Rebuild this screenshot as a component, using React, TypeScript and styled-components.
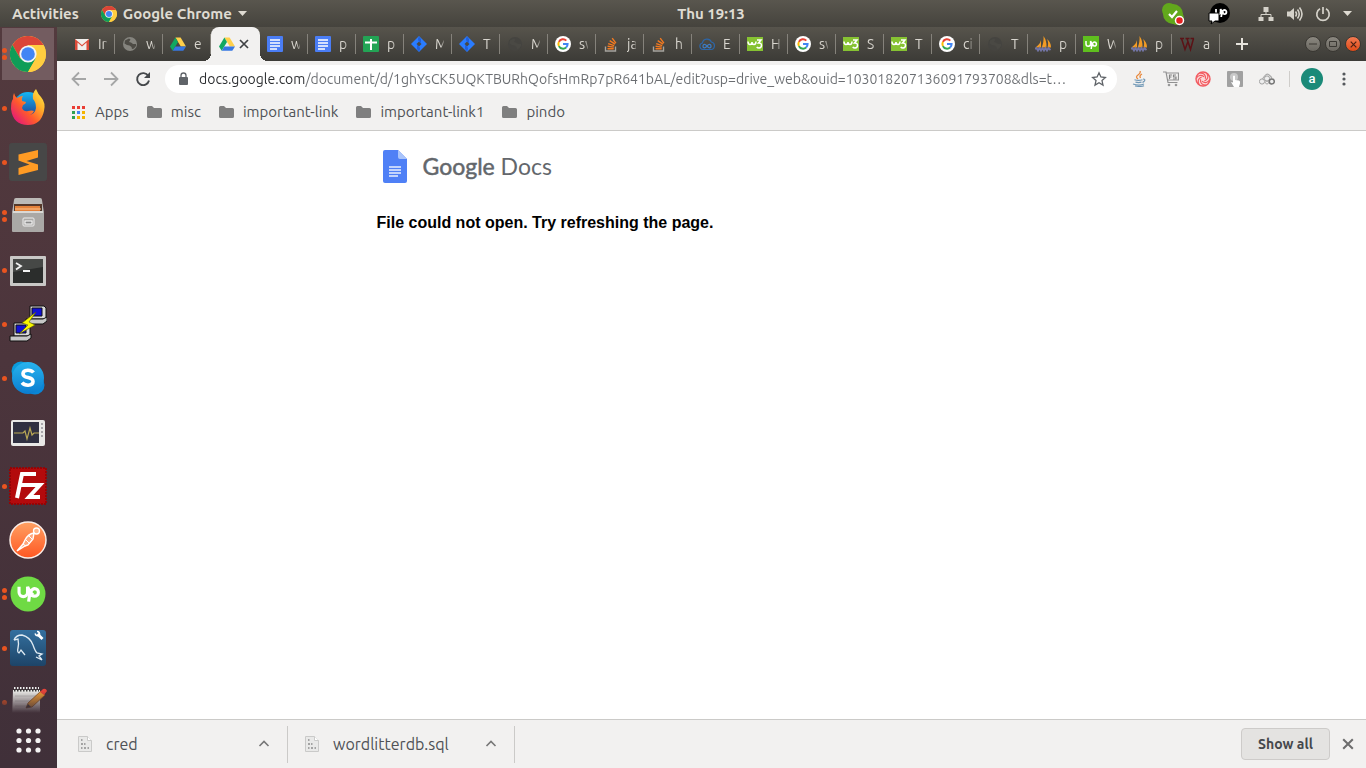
import React, { useState } from 'react';
import styled, { createGlobalStyle, css } from 'styled-components';

const GlobalStyle = createGlobalStyle`
  * { box-sizing: border-box; }
  html, body, #root { height: 100%; margin: 0; }
  body { font-family: Ubuntu, 'Noto Sans', sans-serif; font-size: 14px; background: #fff; overflow: hidden; }
  button { border: 0; padding: 0; background: none; font: inherit; color: inherit; }
  svg { display: block; flex: none; }
`;

/* ---------- shell ---------- */
const Desktop = styled.div`
  display: flex;
  flex-direction: column;
  height: 100vh;
`;
const TopBar = styled.header`
  display: grid;
  grid-template-columns: 1fr auto 1fr;
  align-items: center;
  flex: none;
  height: 27px;
  padding: 0 14px 0 12px;
  background: linear-gradient(#59564e, #45433d);
  color: #dfdbd2;
  font-size: 15px;
  font-weight: 600;
`;
const TopGroup = styled.div<{ $end?: boolean }>`
  display: flex;
  align-items: center;
  justify-content: ${p => (p.$end ? 'flex-end' : 'flex-start')};
`;
const TopButton = styled.button<{ $left?: number }>`
  display: flex;
  align-items: center;
  gap: 6px;
  margin-left: ${p => p.$left ?? 0}px;
  line-height: 20px;
  white-space: nowrap;
`;
const Clock = styled(TopButton)`
  margin-left: 58px;
`;
const Work = styled.div`
  display: flex;
  flex: 1;
  min-height: 0;
`;

/* ---------- dock ---------- */
const Dock = styled.nav`
  display: flex;
  flex-direction: column;
  flex: none;
  width: 57px;
  background: linear-gradient(#533a3e, #4c353c 45%, #403039);
`;
const DockList = styled.div`
  flex: 1;
  min-height: 0;
  overflow: hidden;
  mask-image: linear-gradient(#000 calc(100% - 22px), transparent);
`;
const DockItem = styled.button<{ $active?: boolean }>`
  display: flex;
  align-items: center;
  width: 57px;
  height: 54px;
  padding: 0;
  background: ${p => (p.$active ? 'linear-gradient(#735c60,#735c60) 2px 1px / 52px 52px no-repeat' : 'none')};
  border-radius: 4px;
`;
const Dots = styled.span`
  display: flex;
  flex-direction: column;
  gap: 2px;
  width: 9px;
  padding-left: 2px;
`;
const Dot = styled.i`
  width: 5px;
  height: 5px;
  border-radius: 50%;
  background: #e95420;
`;
const AppsButton = styled.button`
  display: grid;
  place-items: center;
  flex: none;
  height: 55px;
`;

/* ---------- browser ---------- */
const Browser = styled.div`
  display: flex;
  flex-direction: column;
  flex: 1;
  min-width: 0;
  background: #f2f1f0;
`;
const Strip = styled.div`
  display: flex;
  align-items: center;
  flex: none;
  height: 34px;
  padding: 0 5px 0 10px;
  background: linear-gradient(#57544c, #3c3b37);
`;
const Tabs = styled.div`
  display: flex;
  align-items: flex-end;
  height: 34px;
  min-width: 0;
`;
const Tab = styled.button<{ $active?: boolean }>`
  display: flex;
  align-items: center;
  gap: 8px;
  flex: 0 1 auto;
  width: 48px;
  height: 34px;
  padding-left: 7px;
  overflow: hidden;
  color: #d9d6cf;
  background: linear-gradient(#85827b, #85827b) 100% 7px / 1px 20px no-repeat;
  ${p => p.$active && css`
    position: relative;
    width: 49px;
    gap: 4px;
    padding-left: 8px;
    overflow: visible;
    background: #f2f1f0;
    border-radius: 8px 8px 0 0;
    &::before, &::after {
      content: '';
      position: absolute;
      bottom: 0;
      width: 8px;
      height: 8px;
    }
    &::before { right: 100%; background: radial-gradient(circle at 0 0, transparent 8px, #f2f1f0 8px); }
    &::after { left: 100%; background: radial-gradient(circle at 100% 0, transparent 8px, #f2f1f0 8px); }
  `}
`;
const TabLabel = styled.span`
  width: 9px;
  overflow: hidden;
  white-space: nowrap;
  line-height: 20px;
  text-align: left;
  mask-image: linear-gradient(90deg, #000 60%, rgba(0, 0, 0, 0.3));
`;
const NewTab = styled.button`
  margin-left: 15px;
`;
const WindowButtons = styled.div`
  display: flex;
  gap: 4px;
  margin-left: auto;
`;
const WindowButton = styled.button<{ $close?: boolean }>`
  display: grid;
  place-items: center;
  width: 16px;
  height: 16px;
  border-radius: 50%;
  border: 1px solid #3a3833;
  background: ${p => (p.$close ? 'linear-gradient(#f37a52, #df4b18)' : 'linear-gradient(#8b8880, #6b6861)')};
`;
const Toolbar = styled.div`
  display: flex;
  align-items: center;
  flex: none;
  height: 36px;
  padding: 0 14px;
`;
const NavButtons = styled.div`
  display: flex;
  gap: 16px;
  margin-right: 14px;
`;
const Omnibox = styled.label`
  display: flex;
  align-items: center;
  flex: 1;
  min-width: 0;
  height: 28px;
  padding: 0 10px 0 12px;
  background: #fff;
  border-radius: 14px;
`;
const Address = styled.input`
  flex: 1;
  min-width: 0;
  height: 22px;
  margin: 0 8px 0 9px;
  padding: 0;
  border: 0;
  outline: 0;
  font: 14px/22px Ubuntu, 'Noto Sans', sans-serif;
  text-overflow: ellipsis;
  color: transparent;
  background: linear-gradient(90deg, #2b2d30 106px, #6a6d71 106px);
  background-clip: text;
`;
const Extensions = styled.div`
  display: flex;
  align-items: center;
  gap: 16px;
  margin-left: 14px;
`;
const Rule = styled.span`
  width: 1px;
  height: 16px;
  background: #cfcdca;
  margin: 0 -5px 0 -2px;
`;
const Avatar = styled.button`
  width: 22px;
  height: 22px;
  border-radius: 50%;
  background: #1b8a78;
  color: #fff;
  font: 500 13px/20px Roboto, sans-serif;
`;
const MenuButton = styled.button`
  margin-left: -3px;
`;
const Bookmarks = styled.nav`
  display: flex;
  align-items: flex-start;
  gap: 18px;
  flex: none;
  height: 34px;
  padding: 5px 14px 0;
  border-bottom: 1px solid #cbcac8;
  color: #4f5256;
  font-size: 15px;
`;
const Bookmark = styled.a`
  display: flex;
  align-items: center;
  gap: 9px;
  line-height: 20px;
  color: inherit;
  text-decoration: none;
  white-space: nowrap;
`;
const Page = styled.main`
  flex: 1;
  min-height: 0;
  background: #fff;
  overflow: hidden;
`;
const Notice = styled.section`
  width: 52%;
  max-width: 670px;
  margin: 0 auto;
`;
const Logo = styled.div`
  display: flex;
  align-items: center;
  gap: 16px;
  height: 36px;
  margin-top: 17px;
  padding-left: 6px;
  font: 400 23px/36px Lato, sans-serif;
  color: #63676c;
  white-space: nowrap;
`;
const Brand = styled.span`
  -webkit-text-stroke: 0.5px #63676c;
`;
const Message = styled.p`
  margin: 29px 0 0;
  font: bold 16px/20px 'Liberation Sans', Arial, sans-serif;
  color: #000;
`;
const Shelf = styled.footer`
  display: flex;
  align-items: center;
  flex: none;
  height: 49px;
  padding-right: 12px;
  border-top: 1px solid #cbcac8;
  color: #4f5256;
`;
const Download = styled.button<{ $first?: boolean }>`
  display: flex;
  align-items: center;
  gap: 13px;
  width: ${p => (p.$first ? 231 : 227)}px;
  height: 37px;
  padding: 0 17px 0 ${p => (p.$first ? 20 : 16)}px;
  border-right: 1px solid #cbcac8;
  font-size: 16px;
`;
const FileName = styled.span`
  flex: 1;
  text-align: left;
  line-height: 22px;
`;
const ShowAll = styled.button`
  width: 89px;
  height: 32px;
  margin-left: auto;
  border: 1px solid #cdcbc9;
  border-radius: 4px;
  background: #e4e3e1;
  color: #45484c;
  font-weight: 600;
`;
const Dismiss = styled.button`
  margin-left: 12px;
`;

/* ---------- favicons ---------- */
const Fav = ({ children }: { children: React.ReactNode }) => (
  <svg width="16" height="16" viewBox="0 0 16 16" fill="none" aria-hidden="true">{children}</svg>
);
const Chrome = ({ size }: { size: number }) => (
  <svg width={size} height={size} viewBox="0 0 36 36" aria-hidden="true">
    <circle cx="18" cy="18" r="18" fill="#ffcd40" />
    <path d="M2.400 9A18 18 0 0 1 33.600 9H18L10.200 22.500Z" fill="#db4437" />
    <path d="M2.400 9A18 18 0 0 0 18 36L25.800 22.500L10.200 22.500Z" fill="#0f9d58" />
    <path d="M18 9.500H33.800A18 18 0 0 1 18 36L25.800 22.500Z" fill="#ffcd40" />
    <circle cx="18" cy="18" r="8.600" fill="#f4f4f4" />
    <circle cx="18" cy="18" r="6.800" fill="#4285f4" />
  </svg>
);
const Gmail = () => (
  <Fav><path d="M1 3h14v11H1z" fill="#f1efec" /><path d="M1 14V3l7 6 7-6v11h-2.500V6.500L8 10.500 3.500 6.500V14z" fill="#dd4b39" /></Fav>
);
const Globe = ({ dim }: { dim?: boolean }) => (
  <Fav>
    <circle cx="8" cy="8" r="7" fill={dim ? '#454440' : '#85847e'} />
    <path d="M3 4.500l4-2 1.500 1L7 6l2 .5 2 1.500h3v2l-2 2.500-2 .5-.5-2-2-1.500L5 9 2.500 7.500z" fill={dim ? '#4a4944' : '#4d4b45'} />
  </Fav>
);
const Drive = () => (
  <Fav>
    <path d="M5.400 1.500h5.200L16 10.500h-5.200z" fill="#ffd04b" />
    <path d="M5.400 1.500L8 6 2.700 14.800 0 10.500z" fill="#11a861" />
    <path d="M5.300 10.500H16l-2.700 4.300H2.700z" fill="#3777e3" />
  </Fav>
);
const Docs = () => (
  <Fav><rect width="16" height="16" rx="1" fill="#4a7df5" /><path d="M3 4h10M3 7h10M3 10h10M3 13h7" stroke="#fff" strokeWidth="1.500" /></Fav>
);
const Sheets = () => (
  <Fav><rect width="16" height="16" rx="1" fill="#23a455" /><path d="M2 6.500h12M8 3v11" stroke="#fff" strokeWidth="2" /></Fav>
);
const Jira = () => (
  <Fav><path d="M8 0l8 8-8 8-8-8z" fill="#2a7cff" /><path d="M8 5.500l2.500 2.500L8 10.500 5.500 8z" fill="#4a4943" /><path d="M8 .5q-2 3 0 5l2 2V3zM8 15.500q2-3 0-5l-2-2V13z" fill="#1f5fdc" /></Fav>
);
const Google = () => (
  <Fav>
    <circle cx="8" cy="8" r="8" fill="#fff" />
    <path d="M11.300 4.600A4.600 4.600 0 0 0 3.900 5.900" stroke="#ea4335" strokeWidth="2" />
    <path d="M3.900 5.900a4.600 4.600 0 0 0 0 4.200" stroke="#fbbc05" strokeWidth="2" />
    <path d="M3.900 10.100a4.600 4.600 0 0 0 7.200 1.400" stroke="#34a853" strokeWidth="2" />
    <path d="M11.100 11.500A4.600 4.600 0 0 0 12.600 8H8" stroke="#4285f4" strokeWidth="2" />
  </Fav>
);
const Stack = () => (
  <Fav>
    <path d="M2.500 10.500v4.500h10v-4.500" stroke="#a6a49e" strokeWidth="1.400" />
    <path d="M4.500 12.800h6.200M4.600 10.300l6.200.8M5.200 7.600l6 2M6.700 4.700l5.300 3.500M9.200 2.200l3.700 5" stroke="#f47a20" strokeWidth="1.400" />
  </Fav>
);
const Cloud = () => (
  <Fav>
    <path d="M4 13.500a3.300 3.300 0 0 1-.6-6.500 4.700 4.700 0 0 1 9-1A3.800 3.800 0 0 1 12 13.500z" stroke="#2d66a8" strokeWidth="1.200" />
    <path d="M8 10.200c-2-2.600-4-2-4 0s2 2.600 4 0 4-2 4 0-2 2.600-4 0z" stroke="#3d7cc4" strokeWidth="1.300" />
  </Fav>
);
const W3 = () => (
  <Fav>
    <rect y="1" width="16" height="14" fill="#86c232" />
    <path d="M1 5.500q0 3 2 3t2-2.500q0 2.500 2 2.500T9 5.500" stroke="#fff" strokeWidth="1.500" />
    <path d="M10 4h4l-2.500 3q3-.2 3 2.300T12 12q-1.500 0-2.300-1" stroke="#fff" strokeWidth="1.500" />
  </Fav>
);
const Sails = () => (
  <Fav>
    <path d="M6 1.500q1 5-5.500 10H6zM8.500 0q.5 7-2 11.500h5Q12 5 8.500 0zM12 3q2 4 .5 8.500H16Q16 6 12 3z" fill="#f29b25" />
    <path d="M0 13l1.500-1 1.500 2.500L4.500 12 6 14.500 7.500 12 9 14.500l1.500-2.500 1.500 2.500 1.500-2.500 2 2" stroke="#7375a6" strokeWidth="1.900" />
  </Fav>
);
const upStroke = 'M3 5v3a2.300 2.300 0 0 0 4.600 0V5q1 3 3 4.500M8.200 13q.7-7 3.200-7a2 2 0 0 1 0 4.100q-1.800 0-3-2';
const Upwork = () => (
  <Fav><rect width="16" height="16" fill="#5fbf1e" /><path d={upStroke} stroke="#fff" strokeWidth="1.500" /></Fav>
);
const BigW = () => (
  <Fav><path d="M1 2.500h4M6.500 2.500h4M11.500 2.500H15M2.500 2.500l3.500 11 3-8M8 2.500l3.500 11 3-11" stroke="#5b1216" strokeWidth="1.500" /></Fav>
);

const tabs: [React.ReactNode, string][] = [
  [<Gmail />, 'Inbox'], [<Globe />, 'w'], [<Drive />, 'e'], [<Drive />, ''],
  [<Docs />, 'w'], [<Docs />, 'p'], [<Sheets />, 'p'], [<Jira />, 'M'], [<Jira />, 'T'], [<Globe dim />, 'M'],
  [<Google />, 'sw'], [<Stack />, 'ja'], [<Stack />, 'h'], [<Cloud />, 'E'], [<W3 />, 'H'], [<Google />, 'sw'],
  [<W3 />, 'S'], [<W3 />, 'T'], [<Google />, 'ci'], [<Globe dim />, 'T'], [<Sails />, 'p'], [<Upwork />, 'W'],
  [<Sails />, 'p'], [<BigW />, 'a'],
];

/* ---------- dock icons ---------- */
const App38 = ({ children }: { children: React.ReactNode }) => (
  <svg width="38" height="38" viewBox="0 0 38 38" fill="none" aria-hidden="true">{children}</svg>
);
const Firefox = () => (
  <App38>
    <defs>
      <linearGradient id="ff" x1="1" y1="0" x2="0.100" y2="0.900"><stop stopColor="#fff44f" /><stop offset=".35" stopColor="#ffb02a" /><stop offset=".65" stopColor="#ff5a2c" /><stop offset="1" stopColor="#e3187a" /></linearGradient>
      <linearGradient id="ffb" x1="0" y1="0" x2="0" y2="1"><stop stopColor="#14b8f5" /><stop offset="1" stopColor="#24247e" /></linearGradient>
    </defs>
    <circle cx="19" cy="18" r="15" fill="url(#ffb)" />
    <path d="M5 4q1 4 3 5 3-2 6-2-2 2-1 5l4 1q0 2-3 3l-1 3q2 4 6 3 4-1 6 0-2 4-6 4 7 0 8-7 0-6-3-9-1-6 3-10 2 5 5 8 5 6 3 14-3 14-16 14Q4 36 2 20 2 12 4 10 4 6 5 4z" fill="url(#ff)" />
  </App38>
);
const Sublime = () => (
  <App38><rect width="38" height="38" rx="3" fill="#474747" /><path d="M29 7v7.500L17.500 18 29 21.500V27L9.500 32v-7l11-3.500-11-4v-6z" fill="#ff9b24" /></App38>
);
const Files = () => (
  <App38>
    <path d="M5 3q0-2 2-2h24q2 0 2 2l2 13H3z" fill="#bcbab7" /><rect x="5" y="7" width="28" height="9" fill="#56382a" />
    <path d="M6 9h25v6H6z" fill="#e5813a" /><path d="M6 12h26" stroke="#ffc48b" /><rect x="3" y="14" width="32" height="21" rx="1" fill="#aaa8a6" />
    <path d="M4 15h30" stroke="#dad8d5" strokeWidth="2" /><rect x="14" y="21" width="11" height="8" rx="1" stroke="#ededed" /><rect x="16" y="24" width="7" height="3" fill="#888" stroke="#fff" />
  </App38>
);
const Terminal = () => (
  <App38>
    <rect x="1" y="5" width="36" height="30" rx="1" fill="#c9c8c6" /><rect x="4" y="8" width="30" height="24" fill="#2b2d2c" /><path d="M4 8h30v8L4 21z" fill="#464846" />
    <path d="M7 12l5 3-5 3.500M14 20h7" stroke="#f2f2f2" strokeWidth="1.800" />
  </App38>
);
const Putty = () => (
  <App38>
    {[[17, 0], [1, 17]].map(([x, y]) => (
      <g key={x} transform={`translate(${x} ${y})`} stroke="#111">
        <path d="M4 1h14l2 2v11H4z" fill="#d8d8d8" /><path d="M6 3h10v8H6z" fill="#1111d4" /><path d="M0 14h17l4-2v4l-4 3H0z" fill="#c7c7c7" />
      </g>
    ))}
    <path d="M27 7L13 18l6 2-9 9 16-9-6-3z" fill="#f7f500" stroke="#555500" strokeWidth=".6" />
  </App38>
);
const Skype = () => (
  <App38>
    <defs><linearGradient id="sk" x1="0" y1="0" x2="0" y2="1"><stop stopColor="#28b4ee" /><stop offset="1" stopColor="#0a7dd0" /></linearGradient></defs>
    <circle cx="12" cy="12" r="9.500" fill="#0a9bdc" /><circle cx="26" cy="26" r="9.500" fill="#0a86d6" /><circle cx="19" cy="19" r="16" fill="url(#sk)" />
    <path d="M24.500 13.500q-2-2.500-6-2.300-4.500.3-4.500 3.500 0 2.800 5 3.800t5 4q0 3.500-5 3.700-4 0-6-2.500" stroke="#fff" strokeWidth="3.600" />
  </App38>
);
const Monitor = () => (
  <App38>
    <rect x="2" y="7" width="34" height="26" rx="2" fill="#e9e8e6" /><rect x="4" y="9" width="26" height="21" fill="#303041" />
    <path d="M5 20h9l2-2 2 8 3-11 2 7 2-2h5" stroke="#b9a855" strokeWidth="1.200" /><path d="M33 10v14" stroke="#a9a7ab" strokeWidth="2" strokeDasharray="2 2" />
  </App38>
);
const FileZilla = () => (
  <App38>
    <rect x="1" y="1" width="36" height="36" fill="#b30a0c" stroke="#950406" strokeWidth="2" strokeDasharray="2 1" />
    <path d="M8 31L13 7h14M11 18h12M19 18h12L20 30h11" stroke="#fff" strokeWidth="4" />
  </App38>
);
const Postman = () => (
  <App38>
    <defs><linearGradient id="pm" x1="0" y1="0" x2="0" y2="1"><stop stopColor="#ffa163" /><stop offset="1" stopColor="#ff5722" /></linearGradient></defs>
    <circle cx="19" cy="19" r="18" fill="url(#pm)" stroke="#fbeee8" strokeWidth="1.500" />
    <circle cx="27.500" cy="10" r="3" fill="#ffb68c" stroke="#fff" strokeWidth="1.300" />
    <path d="M25 12q-6 1-9 7l-2 4-6 7 8-5 3-1 5-6 1-6z" fill="#ffa67c" stroke="#fff" strokeWidth="1.400" /><path d="M17 19l4 4M14 23l3 2M20 15l4 4" stroke="#fff" />
  </App38>
);
const UpworkBig = () => (
  <App38><circle cx="19" cy="19" r="17.500" fill="#6fda44" /><g transform="translate(4.500 2.500) scale(1.850)"><path d={upStroke} stroke="#fff" strokeWidth="1.700" /></g></App38>
);
const Workbench = () => (
  <App38>
    <defs><linearGradient id="wb" x1="0" y1="0" x2="0" y2="1"><stop stopColor="#34709f" /><stop offset="1" stopColor="#1d4468" /></linearGradient></defs>
    <rect x="1" y="1" width="36" height="36" rx="3" fill="url(#wb)" />
    <path d="M5 11q2-5 8-5 8 2 11 10 2 6 4 8l5 1-3 2 3 4-6-3M5 11l4-1q1 5 0 9-1 4 1 5l2-3 4 5" stroke="#dfeaf2" strokeWidth="1.300" />
    <path d="M28.500 5l5 5" stroke="#fff" strokeWidth="2.800" /><path d="M26 4.500q1 3 4 2M28 2.500q3 0 2.500 4" stroke="#fff" strokeWidth="1.500" />
  </App38>
);
const Notes = () => (
  <App38>
    <path d="M4 7h27v30H3z" fill="#e8e8e5" /><path d="M5 7h25" stroke="#3b3b3b" strokeWidth="3" strokeDasharray="1.500 1.500" /><path d="M5 5h25" stroke="#eee" strokeWidth="2" strokeDasharray="1.500 1.500" />
    <path d="M6 13h22M6 18h19M6 23h15M6 28h22" stroke="#c6c6c4" strokeWidth="1.200" />
    <path d="M17 25l2-5L32 8l4 4-13 12z" fill="#eb9a35" stroke="#8a521c" strokeWidth=".8" /><path d="M31 9l3-3q3-1 4 2l-3 4z" fill="#e4433a" /><path d="M17 25l2-4 3 3z" fill="#333" />
  </App38>
);
const dock: [string, number, React.ReactNode][] = [
  ['Google Chrome', 2, <App38><g transform="translate(1 1)"><Chrome size={36} /></g></App38>],
  ['Firefox', 1, <Firefox />], ['Sublime Text', 1, <Sublime />], ['Files', 2, <Files />], ['Terminal', 1, <Terminal />],
  ['PuTTY', 1, <Putty />], ['Skype', 1, <Skype />], ['System Monitor', 0, <Monitor />], ['FileZilla', 1, <FileZilla />],
  ['Postman', 0, <Postman />], ['Upwork', 2, <UpworkBig />], ['MySQL Workbench', 1, <Workbench />], ['Text Editor', 1, <Notes />],
];

/* ---------- small glyphs ---------- */
const Caret = () => <svg width="9" height="5" viewBox="0 0 9 5" aria-hidden="true"><path d="M0 0h9L4.500 5z" fill="#dfdbd2" /></svg>;
const Cross = ({ size, color }: { size: number; color: string }) => (
  <svg width={size} height={size} viewBox="0 0 10 10" aria-hidden="true"><path d="M1 1l8 8M9 1l-8 8" stroke={color} strokeWidth="1.700" /></svg>
);
const Arrow = ({ flip }: { flip?: boolean }) => (
  <svg width="16" height="16" viewBox="0 0 16 16" fill="none" aria-hidden="true">
    <path d={flip ? 'M1 8h13M8 1.500L14.500 8 8 14.500' : 'M15 8H2M8 1.500L1.500 8 8 14.500'} stroke="#a5a6a6" strokeWidth="1.800" />
  </svg>
);
const Folder = () => <svg width="15" height="12" viewBox="0 0 15 12" aria-hidden="true"><path d="M0 1.500Q0 0 1.500 0H5l2 2h6.500Q15 2 15 3.500v7q0 1.500-1.500 1.500h-12Q0 12 0 10.500z" fill="#7f7f7f" /></svg>;
const AppsGrid = () => (
  <svg width="15" height="13" viewBox="0 0 15 13" aria-hidden="true">
    {['#ea3d34', '#ea3d34', '#ea3d34', '#2fa24f', '#4285f4', '#f4b400', '#2fa24f', '#f4b400', '#f4b400'].map((c, i) => (
      <rect key={i} x={1 + (i % 3) * 5} y={Math.floor(i / 3) * 5} width="3" height="3" fill={c} />
    ))}
  </svg>
);
const FileIcon = () => (
  <svg width="16" height="16" viewBox="0 0 16 16" fill="none" aria-hidden="true">
    <path d="M1.500.5h9l4 4v11h-13z" fill="#e9e9e8" stroke="#cacac9" /><path d="M10.500.5v4h4" fill="#fff" stroke="#cacac9" />
    <path d="M4 4h1.500M4 8h2M7 8h1.500M4 12h1.500M7 12h2M10.500 12H12" stroke="#a3a3a3" strokeWidth="2" />
  </svg>
);
const ChevronUp = () => <svg width="12" height="12" viewBox="0 0 12 12" fill="none" aria-hidden="true"><path d="M1.500 8L6 3.500 10.500 8" stroke="#777" strokeWidth="1.600" /></svg>;

const SkypeTray = () => (
  <svg width="24" height="24" viewBox="0 0 24 24" fill="none" aria-hidden="true">
    <circle cx="8" cy="8" r="7" fill="#62a81c" /><circle cx="16" cy="16" r="7" fill="#62a81c" /><circle cx="12" cy="12" r="10" fill="#62a81c" />
    <path d="M8 12l3 3 5-6" stroke="#fff" strokeWidth="2.200" /><circle cx="18.500" cy="18.500" r="4" fill="#e52222" stroke="#fff" strokeWidth="1.500" />
  </svg>
);
const UpTray = () => (
  <svg width="24" height="24" viewBox="0 0 24 24" fill="none" aria-hidden="true">
    <circle cx="13" cy="11" r="10" fill="#000" /><g transform="translate(6 2)"><path d={upStroke} stroke="#fff" strokeWidth="1.800" /></g><path d="M2 11h10v8H8l-4 3 1-3H2z" fill="#fff" stroke="#000" />
  </svg>
);
const Network = () => (
  <svg width="16" height="16" viewBox="0 0 16 16" fill="none" aria-hidden="true"><path d="M8 5v4M3 12V8.500h10V12" stroke="#d5d2ca" /><path d="M5.500 1h5v5h-5zM.5 11h5v4h-5zM10.500 11h5v4h-5z" fill="#d5d2ca" /></svg>
);
const Volume = () => (
  <svg width="17" height="16" viewBox="0 0 17 16" fill="none" aria-hidden="true"><path d="M1 5.500h3L8 2v12l-4-3.500H1z" fill="#d5d2ca" /><path d="M9.500 5.500q2 2.500 0 5M11.500 3.500q3.500 4.500 0 9M13.500 1.500q5 6.500 0 13" stroke="#d5d2ca" strokeWidth="1.600" /></svg>
);
const Power = () => (
  <svg width="16" height="16" viewBox="0 0 16 16" fill="none" aria-hidden="true"><path d="M5 2.800a6.200 6.200 0 1 0 6 0M8 1v7" stroke="#d5d2ca" strokeWidth="1.700" /></svg>
);

const Java = () => (
  <Fav><path d="M9 0q1 2-2 4t0 4M11 3Q8 4.500 9.500 7" stroke="#e8883c" strokeWidth="1.300" /><path d="M3.500 8.800q4 1.300 8 0M4.500 11.200q3 .8 6 0M12 8q3 0 1 2.500l-1.500 1M2 13q6 2 11 0M4 15q6 1 9-.3" stroke="#6e96b5" strokeWidth="1.200" /></Fav>
);
const Cart = () => (
  <Fav><path d="M0 1h3l2 10.500h9.500M3.500 2H15.500v7H5" stroke="#919191" strokeWidth="1.200" /><path d="M6.500 8V4H9M6.500 6h2M13 4h-2.500v2H13v2h-3" stroke="#858585" strokeWidth="1.200" /><circle cx="6" cy="14" r="1.300" fill="#999" /><circle cx="13" cy="14" r="1.300" fill="#999" /></Fav>
);
const Swirl = () => (
  <Fav>
    <circle cx="8" cy="8" r="7" fill="#fbd9d8" stroke="#f25a60" strokeWidth="1.400" />
    {[0, 60, 120, 180, 240, 300].map(a => <path key={a} transform={`rotate(${a} 8 8)`} d="M5 1.800q6 .2 5.500 6" stroke="#f25a60" strokeWidth="1.200" />)}
  </Fav>
);
const Touch = () => (
  <Fav><rect width="16" height="16" rx="1" fill="#a1a1a1" /><circle cx="7" cy="6" r="4" fill="#c9c9c9" /><path d="M6 5q1-1 2 0v4l4 .5q1.500.5 1 3L12 16H7l-3-5 2 .5z" fill="#fff" /></Fav>
);
const Rings = () => (
  <Fav><path d="M3.500 8q3.500-6 6-4.500t3.500 4" stroke="#aaa" strokeWidth="1.200" /><circle cx="3" cy="10.500" r="2.600" fill="#eee" stroke="#a2a2a2" /><circle cx="8" cy="7.500" r="2.600" fill="#eee" stroke="#a2a2a2" /><circle cx="8" cy="11.500" r="1.500" stroke="#aaa" /><circle cx="12.800" cy="10.500" r="2.500" fill="#eee" stroke="#777" strokeWidth="1.500" /></Fav>
);

export default function App() {
  const [url, setUrl] = useState('docs.google.com/document/d/1ghYsCK5UQKTBURhQofsHmRp7pR641bAL/edit?usp=drive_web&ouid=103018207136091793708&dls=t…');
  return (
    <>
      <GlobalStyle />
      <Desktop>
        <TopBar>
          <TopGroup>
            <TopButton>Activities</TopButton>
            <TopButton $left={22}><Chrome size={16} />Google Chrome<Caret /></TopButton>
          </TopGroup>
          <Clock>Thu 19:13</Clock>
          <TopGroup $end>
            <TopButton aria-label="Skype status"><SkypeTray /></TopButton>
            <TopButton $left={22} aria-label="Upwork"><UpTray /></TopButton>
            <TopButton $left={27} aria-label="System menu"><Network /></TopButton>
            <TopButton $left={12} aria-label="Volume"><Volume /></TopButton>
            <TopButton $left={12} aria-label="Power"><Power /></TopButton>
            <TopButton $left={12} aria-label="More"><Caret /></TopButton>
          </TopGroup>
        </TopBar>
        <Work>
          <Dock aria-label="Dock">
            <DockList>
              {dock.map(([name, dots, icon], i) => (
                <DockItem key={name} $active={i === 0} aria-label={name}>
                  <Dots>{Array.from({ length: dots }, (_, d) => <Dot key={d} />)}</Dots>
                  {icon}
                </DockItem>
              ))}
            </DockList>
            <AppsButton aria-label="Show applications">
              <svg width="25" height="25" viewBox="0 0 25 25" aria-hidden="true">
                {Array.from({ length: 9 }, (_, i) => <circle key={i} cx={3 + (i % 3) * 9.5} cy={3 + Math.floor(i / 3) * 9.5} r="2.600" fill="#f4f2f2" />)}
              </svg>
            </AppsButton>
          </Dock>
          <Browser>
            <Strip>
              <Tabs role="tablist">
                {tabs.map(([icon, label], i) => (
                  <Tab key={i} role="tab" $active={i === 3} aria-selected={i === 3}>
                    {icon}
                    {i === 3 ? <Cross size={10} color="#3f4144" /> : <TabLabel>{label}</TabLabel>}
                  </Tab>
                ))}
              </Tabs>
              <NewTab aria-label="New tab">
                <svg width="14" height="14" viewBox="0 0 14 14" aria-hidden="true"><path d="M7 1v12M1 7h12" stroke="#e6e3dc" strokeWidth="2" /></svg>
              </NewTab>
              <WindowButtons>
                <WindowButton aria-label="Minimise"><svg width="8" height="8"><path d="M0 4h8" stroke="#3a3833" /></svg></WindowButton>
                <WindowButton aria-label="Maximise"><svg width="8" height="8"><path d="M.5 1.500h7v5h-7z" fill="none" stroke="#3a3833" /></svg></WindowButton>
                <WindowButton $close aria-label="Close"><Cross size={7} color="#4a2013" /></WindowButton>
              </WindowButtons>
            </Strip>
            <Toolbar>
              <NavButtons>
                <button aria-label="Back"><Arrow /></button>
                <button aria-label="Forward"><Arrow flip /></button>
                <button aria-label="Reload">
                  <svg width="16" height="16" viewBox="0 0 16 16" fill="none" aria-hidden="true"><path d="M13.300 5A6 6 0 1 0 14 9.500" stroke="#45484b" strokeWidth="1.900" /><path d="M15 1v6H9z" fill="#45484b" /></svg>
                </button>
              </NavButtons>
              <Omnibox>
                <svg width="13" height="14" viewBox="0 0 13 14" fill="none" aria-hidden="true"><rect x="2" y="5" width="9" height="8" rx="1" fill="#5f6368" /><path d="M4 5V3.500a2.500 2.500 0 0 1 5 0V5" stroke="#5f6368" strokeWidth="1.300" /></svg>
                <Address aria-label="Address" value={url} onChange={e => setUrl(e.target.value)} spellCheck={false} />
                <svg width="16" height="16" viewBox="0 0 16 16" fill="none" aria-hidden="true"><path d="M8 1.800l1.900 4.200 4.500.5-3.400 3.100 1 4.500L8 11.800l-4 2.300 1-4.500L1.600 6.500 6.100 6z" stroke="#5f6368" strokeWidth="1.300" /></svg>
              </Omnibox>
              <Extensions>
                <button aria-label="Java"><Java /></button>
                <button aria-label="Cart"><Cart /></button>
                <button aria-label="Swirl"><Swirl /></button>
                <button aria-label="Touch"><Touch /></button>
                <button aria-label="Rings"><Rings /></button>
                <Rule />
                <Avatar>a</Avatar>
                <MenuButton aria-label="Menu"><svg width="16" height="16" viewBox="0 0 16 16" fill="#55585c" aria-hidden="true"><circle cx="8" cy="3" r="1.600" /><circle cx="8" cy="8" r="1.600" /><circle cx="8" cy="13" r="1.600" /></svg></MenuButton>
              </Extensions>
            </Toolbar>
            <Bookmarks aria-label="Bookmarks">
              <Bookmark href="#apps"><AppsGrid />Apps</Bookmark>
              {['misc', 'important-link', 'important-link1', 'pindo'].map(n => <Bookmark key={n} href={`#${n}`}><Folder />{n}</Bookmark>)}
            </Bookmarks>
            <Page>
              <Notice>
                <Logo>
                  <svg width="24" height="33" viewBox="0 0 24 33" aria-hidden="true">
                    <path d="M2 0h13l9 9v22q0 2-2 2H2q-2 0-2-2V2q0-2 2-2z" fill="#4f80f6" /><path d="M15 0l9 9h-7q-2 0-2-2z" fill="#a9c4fb" />
                    <path d="M6 17h12M6 20h12M6 23h12M6 26h9" stroke="#e9f0fe" strokeWidth="1.400" />
                  </svg>
                  <span><Brand>Google</Brand> Docs</span>
                </Logo>
                <Message>File could not open. Try refreshing the page.</Message>
              </Notice>
            </Page>
            <Shelf>
              <Download $first><FileIcon /><FileName>cred</FileName><ChevronUp /></Download>
              <Download><FileIcon /><FileName>wordlitterdb.sql</FileName><ChevronUp /></Download>
              <ShowAll>Show all</ShowAll>
              <Dismiss aria-label="Close downloads"><Cross size={12} color="#6d6d6d" /></Dismiss>
            </Shelf>
          </Browser>
        </Work>
      </Desktop>
    </>
  );
}
